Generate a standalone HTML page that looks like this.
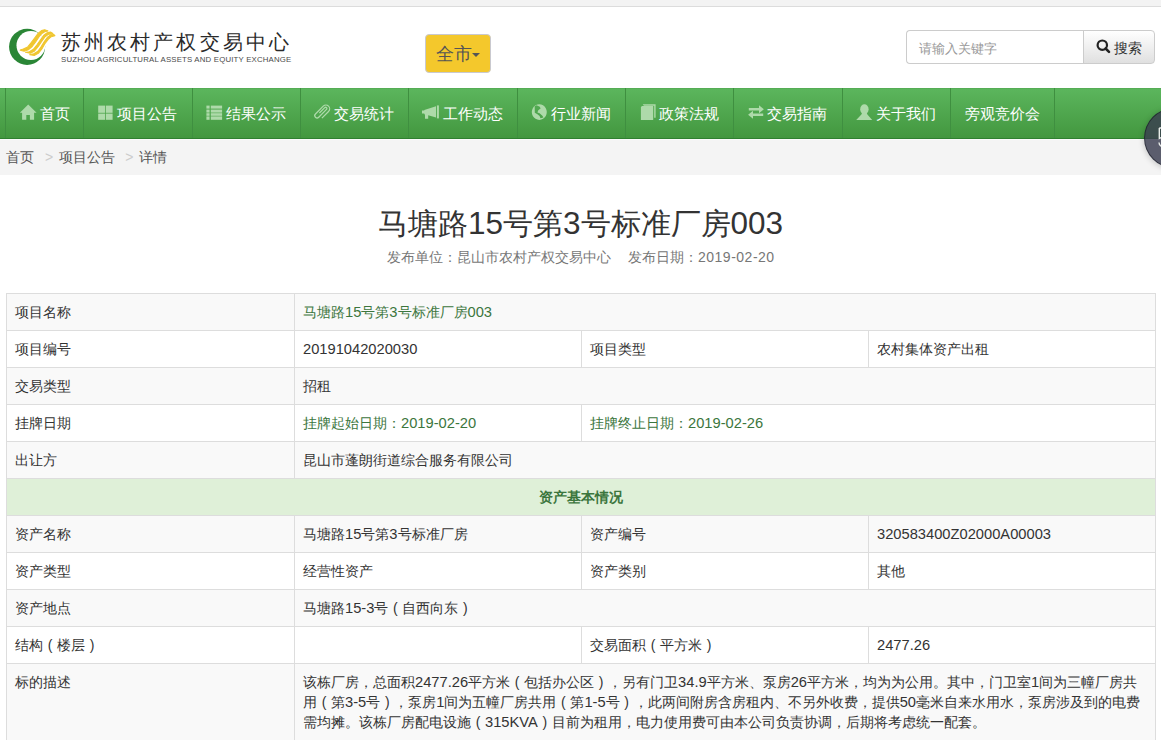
<!DOCTYPE html>
<html><head><meta charset="utf-8">
<style>
*{box-sizing:border-box;}
html,body{margin:0;padding:0;background:#fff;}
body{width:1161px;height:740px;overflow:hidden;position:relative;font-family:"Liberation Sans",sans-serif;font-size:14px;color:#333;line-height:20px;}
.topbar{position:absolute;left:0;top:0;width:1161px;height:7px;background:#f3f3f3;border-bottom:1px solid #dcdcdc;}
.header{position:absolute;left:0;top:7px;width:1161px;height:81px;background:#fff;}
.logo{position:absolute;left:0;top:20px;}
.logo-cn{position:absolute;left:61px;top:22px;font-size:20px;line-height:26px;letter-spacing:3.1px;color:#2a2a2a;white-space:nowrap;}
.logo-en{position:absolute;left:61px;top:48px;font-size:7.8px;line-height:10px;letter-spacing:0.19px;color:#4a4a4a;white-space:nowrap;}
.city{position:absolute;left:425px;top:34px;width:66px;height:39px;background:#f4c82c;border:1px solid #c9c9cf;border-radius:4px;color:#555;font-size:18px;line-height:38px;padding-left:10px;}
.caret{display:inline-block;width:0;height:0;border-left:4px solid transparent;border-right:4px solid transparent;border-top:4px solid #555;vertical-align:middle;margin-left:0px;position:relative;top:0px;}
.search{position:absolute;left:906px;top:30px;width:178px;height:34px;border:1px solid #ccc;border-right:none;border-radius:4px 0 0 4px;background:#fff;color:#999;font-size:13px;line-height:32px;padding-left:12px;padding-top:2px;}
.sbtn{position:absolute;left:1083px;top:30px;width:72px;height:34px;border:1px solid #ccc;border-radius:0 4px 4px 0;background:linear-gradient(#fff,#e0e0e0);color:#333;font-size:14px;line-height:32px;}
.nav{position:absolute;left:0;top:88px;width:1161px;height:51px;background:linear-gradient(#5cb65d,#43973f);border-bottom:1px solid #2f8030;box-shadow:inset 0 1px 0 rgba(0,60,0,0.07);}
.nav .it{position:absolute;top:1px;height:50px;color:#fff;font-size:15px;line-height:50px;white-space:nowrap;}
.nav .ico{position:absolute;}
.nav .sep{position:absolute;top:0;width:1px;height:50px;background:#3f8f40;}
.crumb{position:absolute;left:0;top:139px;width:1161px;height:36px;background:#f4f4f4;border-top:1px solid #fbfbfb;color:#555;font-size:14px;line-height:34px;padding-left:6px;}
.crumb .gt{color:#ccc;padding:0 5px 0 11px;}
.title{position:absolute;left:0;top:203px;width:1161px;text-align:center;font-size:30px;line-height:40px;color:#333;}
.sub{position:absolute;left:0;top:247px;width:1161px;font-size:14px;line-height:20px;color:#777;}
table{position:absolute;left:6px;top:293px;width:1149px;border-collapse:collapse;table-layout:fixed;}
td{border:1px solid #ddd;padding:8px;height:37px;vertical-align:top;line-height:20px;font-size:14px;color:#333;}
tr:nth-child(odd) td{background:#f9f9f9;}
tr.success td{background:#dff0d8;color:#3c763d;font-weight:bold;text-align:center;}
.g{color:#3c763d;}
.tn{font-size:31.5px;}
.n{letter-spacing:0.5px;}
td .n{font-size:14.7px;letter-spacing:0;}
.pl,.pr{display:inline-block;width:14px;text-align:center;}
.chat{position:absolute;left:1144px;top:108px;width:60px;height:60px;border-radius:50%;background:rgba(57,60,79,0.82);border:1px solid rgba(20,24,34,0.6);box-shadow:0 1px 6px rgba(0,0,0,0.22);}
</style></head><body>
<div class="topbar"></div>
<div class="header">
  <svg class="logo" width="60" height="45" viewBox="0 0 60 45">
<defs><mask id="cm"><rect x="0" y="0" width="60" height="45" fill="#fff"/><circle cx="30.9" cy="18.5" r="14.4" fill="#000"/></mask></defs>
<circle cx="27.1" cy="19.85" r="18.05" fill="#2a8636" mask="url(#cm)"/>
<g fill="#f0c630" stroke="#f0c630" stroke-width="1.1" stroke-linejoin="round">
<polygon points="20.2,23.1 23.3,22.1 27.7,19.9 31.4,15.4 35,10.5 38.3,6.1 41.5,3.6 44.7,2.8 48,3.9 44.7,4.7 41.9,6.5 39.1,9.7 35.8,14.6 32.2,19.5 28.5,22.7 24.1,24.3"/>
<polygon points="25.5,25.3 29.3,24.7 33.4,22.3 37,17.8 40.7,12.6 43.9,8.1 47.2,5.7 50.4,5.1 52.9,6.5 48,7.5 44.7,10.1 41.5,14.6 38.3,19.5 34.2,24.3 30.2,26.3"/>
<polygon points="29.8,27.6 33.8,26.7 37.9,24.3 41.1,19.9 44.3,14.6 47.6,10.1 50.8,7.7 53.7,7.5 54.9,8.7 51.2,9.7 48,12.6 44.7,17 41.9,21.9 38.3,26.3 34.2,28.4"/>
</g></svg>
  <div class="logo-cn">苏州农村产权交易中心</div>
  <div class="logo-en">SUZHOU AGRICULTURAL ASSETS AND EQUITY EXCHANGE</div>
</div>
<div class="city">全市<span class="caret"></span></div>
<div class="search">请输入关键字</div>
<div class="sbtn"><svg style="position:absolute;left:12px;top:8px" width="16" height="16" viewBox="0 0 16 16"><circle cx="6.3" cy="6.2" r="4.7" fill="none" stroke="#222" stroke-width="2.2"/><path d="M9.6 9.5 L13 12.9" stroke="#222" stroke-width="2.6" stroke-linecap="round"/></svg><span style="position:absolute;left:30px;top:1px">搜索</span></div>
<div class="nav">
<div class="sep" style="left:5px"></div>
<svg class="ico" style="left:19px;top:16px" width="18" height="17" viewBox="0 0 18 17"><path d="M9.2 0.4 L17.6 8.7 L15.1 8.7 L15.1 15.8 L10.9 15.8 L10.9 10.9 L7.3 10.9 L7.3 15.8 L3.1 15.8 L3.1 8.7 L0.9 8.7 Z" fill="#aedaaa"/></svg>
<span class="it" style="left:40px">首页</span>
<div class="sep" style="left:83px"></div>
<svg class="ico" style="left:98px;top:17px" width="15" height="15" viewBox="0 0 15 15"><rect x="0.2" y="0.6" width="6.8" height="7.2" fill="#aedaaa"/><rect x="7.8" y="0.6" width="6.8" height="7.2" fill="#aedaaa"/><rect x="0.2" y="8.6" width="6.8" height="6.2" fill="#aedaaa"/><rect x="7.8" y="8.6" width="6.8" height="6.2" fill="#aedaaa"/></svg>
<span class="it" style="left:117px">项目公告</span>
<div class="sep" style="left:192px"></div>
<svg class="ico" style="left:206px;top:17px" width="17" height="15" viewBox="0 0 17 15"><rect x="0.4" y="0.6" width="3.2" height="3" fill="#aedaaa"/><rect x="4.8" y="0.6" width="11.3" height="3" fill="#aedaaa"/><rect x="0.4" y="4.6" width="3.2" height="3" fill="#aedaaa"/><rect x="4.8" y="4.6" width="11.3" height="3" fill="#aedaaa"/><rect x="0.4" y="8.2" width="3.2" height="2.6" fill="#aedaaa"/><rect x="4.8" y="8.2" width="11.3" height="2.6" fill="#aedaaa"/><rect x="0.4" y="11.4" width="3.2" height="3.4" fill="#aedaaa"/><rect x="4.8" y="11.4" width="11.3" height="3.4" fill="#aedaaa"/></svg>
<span class="it" style="left:226px">结果公示</span>
<div class="sep" style="left:300px"></div>
<svg class="ico" style="left:312px;top:14px" width="22" height="19" viewBox="0 0 22 19"><path transform="rotate(-45)" d="M-4.4 18.4 L5 18.4 A3.75 3.75 0 0 0 5 10.9 L-6 10.9 A2.3 2.3 0 0 0 -6 15.5 L5 15.5 A1.25 1.25 0 0 0 5 13 L-2.5 13" fill="none" stroke="#aedaaa" stroke-width="1.25"/></svg>
<span class="it" style="left:334px">交易统计</span>
<div class="sep" style="left:408px"></div>
<svg class="ico" style="left:421px;top:17px" width="18" height="15" viewBox="0 0 18 15"><path d="M1 5.5 L3.3 5.5 L3.3 5 L15 1.2 L15 12.5 L7.2 10.3 L7.2 13.8 L4 13.8 L4 9.4 L3.3 9.3 L3.3 8.5 L1 8.5 Z" fill="#aedaaa"/><rect x="15.9" y="0.4" width="2" height="13" fill="#aedaaa"/></svg>
<span class="it" style="left:443px">工作动态</span>
<div class="sep" style="left:517px"></div>
<svg class="ico" style="left:531px;top:16px" width="17" height="17" viewBox="0 0 17 17"><path fill-rule="evenodd" d="M8.3 0.3 A7.5 7.8 0 1 1 8.29 0.3 Z M3.7 2.2 L3.8 8.8 L6.4 10.2 L8.6 12.1 L9.5 14.3 L12.4 13.6 L11.4 11.7 L8.6 9.3 L6.4 8.6 L7.3 6.2 L9.6 4.6 L8.8 2.7 L7.2 2 L5.6 1.2 Z" fill="#aedaaa"/></svg>
<span class="it" style="left:551px">行业新闻</span>
<div class="sep" style="left:625px"></div>
<svg class="ico" style="left:640px;top:16px" width="17" height="17" viewBox="0 0 17 17"><path d="M2.7 0.3 L15.6 0.3 L15.6 13.8 L14.2 13.8 L14.2 1.7 L3.9 1.7 Z" fill="#aedaaa"/><path d="M2 2 L13.2 2 L13.2 16 L0.9 16 L0.9 3.1 Z" fill="#aedaaa"/></svg>
<span class="it" style="left:659px">政策法规</span>
<div class="sep" style="left:733px"></div>
<svg class="ico" style="left:748px;top:17px" width="17" height="14" viewBox="0 0 17 14"><path d="M0.8 3 L11 3 L11 0.2 L15.9 4.2 L11 8.2 L11 5.4 L0.8 5.4 Z" fill="#aedaaa"/><path d="M15.2 9.8 L5 9.8 L5 7 L0.1 11 L5 15 L5 12.2 L15.2 12.2 Z" fill="#aedaaa" transform="translate(0,-1.2)"/></svg>
<span class="it" style="left:767px">交易指南</span>
<div class="sep" style="left:842px"></div>
<svg class="ico" style="left:856px;top:16px" width="17" height="17" viewBox="0 0 17 17"><ellipse cx="8.4" cy="5.2" rx="4.2" ry="5" fill="#aedaaa"/><path d="M6 9 L10.8 9 L11.4 10.4 L16.2 15.9 L0.2 15.9 L5.4 10.4 Z" fill="#aedaaa"/></svg>
<span class="it" style="left:876px">关于我们</span>
<div class="sep" style="left:950px"></div>
<span class="it" style="left:965px">旁观竞价会</span>
<div class="sep" style="left:1054px"></div>
</div>
<div class="crumb">首页<span class="gt" style="padding:0 6px 0 11px">&gt;</span>项目公告<span class="gt" style="padding:0 6px 0 10px">&gt;</span>详情</div>
<div class="title">马塘路<span class="tn">15</span>号第<span class="tn">3</span>号标准厂房<span class="tn">003</span></div>
<div class="sub"><span style="position:absolute;left:387px">发布单位：昆山市农村产权交易中心</span><span style="position:absolute;left:628px">发布日期：<span class="n">2019-02-20</span></span></div>
<table>
<colgroup><col style="width:288px"><col style="width:287px"><col style="width:287px"><col style="width:287px"></colgroup>
<tr><td>项目名称</td><td colspan="3" class="g">马塘路<span class="n">15</span>号第<span class="n">3</span>号标准厂房<span class="n">003</span></td></tr>
<tr><td>项目编号</td><td><span class="n">20191042020030</span></td><td>项目类型</td><td>农村集体资产出租</td></tr>
<tr><td>交易类型</td><td colspan="3">招租</td></tr>
<tr><td>挂牌日期</td><td class="g">挂牌起始日期：<span class="n">2019-02-20</span></td><td colspan="2" class="g">挂牌终止日期：<span class="n">2019-02-26</span></td></tr>
<tr><td>出让方</td><td colspan="3">昆山市蓬朗街道综合服务有限公司</td></tr>
<tr class="success"><td colspan="4">资产基本情况</td></tr>
<tr><td>资产名称</td><td>马塘路<span class="n">15</span>号第<span class="n">3</span>号标准厂房</td><td>资产编号</td><td><span class="n">320583400Z02000A00003</span></td></tr>
<tr><td>资产类型</td><td>经营性资产</td><td>资产类别</td><td>其他</td></tr>
<tr><td>资产地点</td><td colspan="3">马塘路<span class="n">15-3</span>号<span class="pl">(</span>自西向东<span class="pr">)</span></td></tr>
<tr><td>结构<span class="pl">(</span>楼层<span class="pr">)</span></td><td></td><td>交易面积<span class="pl">(</span>平方米<span class="pr">)</span></td><td><span class="n">2477.26</span></td></tr>
<tr><td>标的描述</td><td colspan="3">该栋厂房，总面积<span class="n">2477.26</span>平方米<span class="pl">(</span>包括办公区<span class="pr">)</span>，另有门卫<span class="n">34.9</span>平方米、泵房<span class="n">26</span>平方米，均为为公用。其中，门卫室<span class="n">1</span>间为三幢厂房共<br>用<span class="pl">(</span>第<span class="n">3-5</span>号<span class="pr">)</span>，泵房<span class="n">1</span>间为五幢厂房共用<span class="pl">(</span>第<span class="n">1-5</span>号<span class="pr">)</span>，此两间附房含房租内、不另外收费，提供<span class="n">50</span>毫米自来水用水，泵房涉及到的电费<br>需均摊。该栋厂房配电设施<span class="pl">(</span><span class="n">315KVA</span><span class="pr">)</span>目前为租用，电力使用费可由本公司负责协调，后期将考虑统一配套。</td></tr>
</table>
<div class="chat"><svg style="position:absolute;left:12px;top:18px" width="10" height="22" viewBox="0 0 10 22"><path d="M2.3 1 L2.3 11.5 L6 9.8 L10 9.8 M2.3 1 L10 1" fill="none" stroke="#e8ece8" stroke-width="1.4"/><path d="M2 15.5 C2 19 4.5 20.5 10 20.5" fill="none" stroke="#e8ece8" stroke-width="1.4"/></svg></div>
</body></html>
